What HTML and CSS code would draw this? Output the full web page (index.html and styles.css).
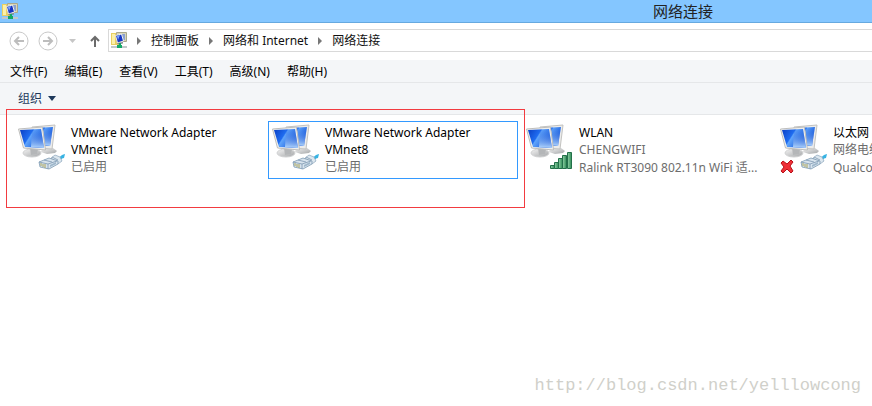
FILE: index.html
```
<!DOCTYPE html>
<html lang="zh-CN">
<head>
<meta charset="utf-8">
<title>网络连接</title>
<link rel="stylesheet" href="styles.css">
</head>
<body>
<svg class="defs" aria-hidden="true">
  <defs>
    <linearGradient id="screen" x1="0" y1="0" x2="1" y2="0.5">
      <stop offset="0" stop-color="#0a3fc4"/>
      <stop offset="0.45" stop-color="#1f6cf0"/>
      <stop offset="0.5" stop-color="#5fa4fb"/>
      <stop offset="1" stop-color="#1456dc"/>
    </linearGradient>
    <linearGradient id="shine" x1="0" y1="0" x2="0" y2="1">
      <stop offset="0" stop-color="#0c48cf" stop-opacity="0"/>
      <stop offset="1" stop-color="#c4e4ff" stop-opacity="0.9"/>
    </linearGradient>
    <linearGradient id="stand" x1="0" y1="0" x2="1" y2="1">
      <stop offset="0" stop-color="#f4f4f4"/>
      <stop offset="1" stop-color="#a3a5a7"/>
    </linearGradient>
    <linearGradient id="bar" x1="0" y1="0" x2="1" y2="0">
      <stop offset="0" stop-color="#93d1a8"/>
      <stop offset="1" stop-color="#2f8c56"/>
    </linearGradient>
    <symbol id="folder-net" viewBox="0 0 16 17">
      <path d="M0 1h5l1 1h3v11H0z" fill="#e8cf62"/>
      <path d="M1 2h3v10H1z" fill="#fbf0a8"/>
      <path d="M5.500 0.500h10v9h-10z" fill="#d9d6b8" stroke="#aaa88c"/>
      <path d="M7 2h7v6H7z" fill="#8ba0d0"/>
      <path d="M4.500 3.500l6-1.500 2 7-6 2z" fill="#1837c6" stroke="#f1f1e8"/>
      <path d="M6 4l3-1-2 5z" fill="#7fa9ff"/>
      <path d="M6 11l6-1v1.500l-5 1z" fill="#86888c"/>
      <path d="M0 14h16v2H0z" fill="#c2c8ca"/>
      <path d="M8 11h2v2h1v3H6v-3h2z" fill="#13a866"/>
    </symbol>
    <symbol id="monitors" viewBox="0 0 48 48">
      <path d="M24 26l11-1 4 3-2 2-8 1-6-2z" fill="url(#stand)"/>
      <path d="M14 4l23-2-3 24-15-1z" fill="#ececeb" stroke="#c2c2c0"/>
      <path d="M16 5l19-1-3 19-14-1z" fill="url(#screen)"/>
      <path d="M26 5l9-1-3 19-6-1z" fill="url(#shine)"/>
      <ellipse cx="14" cy="30" rx="9" ry="4" fill="url(#stand)" stroke="#d0d1d2"/>
      <path d="M12 25l8 1-1 5-6 1z" fill="#b4b6b8"/>
      <path d="M0.500 6l24-2 3 23-22-2z" fill="#f0f0ee" stroke="#bebebc"/>
      <path d="M2 7l21-1 3 19-19-1z" fill="url(#screen)"/>
      <path d="M14 6l9-1 3 20-13-1z" fill="url(#shine)"/>
    </symbol>
    <symbol id="plug" viewBox="0 0 28 18">
      <path d="M19 5c3 0 3-3 8-4l-1 4c-3 0-3 3-6 4z" fill="#38b3e3"/>
      <path d="M13 5l4-3 5 2 2 4-4 3z" fill="#dce7ef" stroke="#8aa4ba" stroke-width="0.700"/>
      <path d="M1 9l10-4 9 3v3l-9 5-9-2z" fill="#d7e3ed" stroke="#7e9ab3" stroke-width="0.800"/>
      <path d="M1 9l9 2 9-3M10 11v5M6 7l8 2M14 4l6 3" fill="none" stroke="#7d98b1" stroke-width="0.800"/>
      <path d="M3 10v3M5 11v3M7 11v4" stroke="#aaa45c"/>
      <path d="M12 12l6-3v2l-6 3z" fill="#9fb7cb"/>
    </symbol>
    <symbol id="signal" viewBox="0 0 22 18">
      <g fill="url(#bar)" stroke="#23704a">
        <path d="M0.500 14.500h4v3h-4z"/>
        <path d="M4.500 11.500h4v6h-4z"/>
        <path d="M8.500 7.500h4v10h-4z"/>
        <path d="M12.500 4.500h4v13h-4z"/>
        <path d="M17.500 1.500h4v16h-4z"/>
      </g>
    </symbol>
    <symbol id="cross" viewBox="0 0 14 14">
      <path d="M1 3l2-2 4 3 4-4 2 2-3 4 3 5-2 2-4-4-4 4-2-2 3-4z" fill="#ef3038" stroke="#b91119"/>
    </symbol>
    <symbol id="back" viewBox="0 0 20 20">
      <circle cx="10" cy="10" r="9" fill="none" stroke="#c9c9c9"/>
      <path d="M15 10H6M10 6l-4 4 4 4" fill="none" stroke="#bdbdbd" stroke-width="2"/>
    </symbol>
  </defs>
</svg>

<header class="titlebar">
  <svg class="small-icon"><use href="#folder-net"/></svg>
  <h1>网络连接</h1>
</header>

<nav class="navbar" aria-label="导航">
  <button class="round" aria-label="后退"><svg><use href="#back"/></svg></button>
  <button class="round forward" aria-label="前进"><svg><use href="#back"/></svg></button>
  <button class="recent" aria-label="最近位置"><svg viewBox="0 0 7 4"><path d="M0 0h7L3.500 4z" fill="#c6c6c6"/></svg></button>
  <button class="up" aria-label="上移"><svg viewBox="0 0 10 12"><path d="M5 12V2M1 6l4-4 4 4" fill="none" stroke="#6b6b6b" stroke-width="2"/></svg></button>
  <div class="address">
    <svg class="small-icon"><use href="#folder-net"/></svg>
    <a href="#">控制面板</a>
    <a href="#">网络和 Internet</a>
    <a href="#">网络连接</a>
  </div>
</nav>

<div class="menubar">
  <button>文件(F)</button>
  <button>编辑(E)</button>
  <button>查看(V)</button>
  <button>工具(T)</button>
  <button>高级(N)</button>
  <button>帮助(H)</button>
</div>

<div class="toolbar">
  <button>组织 <svg viewBox="0 0 8 5"><path d="M0 0h8L4 5z" fill="#1e395b"/></svg></button>
</div>

<main class="content">
  <ul class="connections">
    <li class="connection">
      <span class="icon"><svg class="pc"><use href="#monitors"/></svg><svg class="plug"><use href="#plug"/></svg></span>
      <div class="info"><h2>VMware Network Adapter VMnet1</h2><p>已启用</p></div>
    </li>
    <li class="connection selected">
      <span class="icon"><svg class="pc"><use href="#monitors"/></svg><svg class="plug"><use href="#plug"/></svg></span>
      <div class="info"><h2>VMware Network Adapter VMnet8</h2><p>已启用</p></div>
    </li>
    <li class="connection">
      <span class="icon"><svg class="pc"><use href="#monitors"/></svg><svg class="signal"><use href="#signal"/></svg></span>
      <div class="info"><h2>WLAN</h2><p>CHENGWIFI</p><p>Ralink RT3090 802.11n WiFi 适...</p></div>
    </li>
    <li class="connection">
      <span class="icon"><svg class="pc"><use href="#monitors"/></svg><svg class="plug"><use href="#plug"/></svg><svg class="cross"><use href="#cross"/></svg></span>
      <div class="info"><h2>以太网</h2><p>网络电缆</p><p>Qualcomm</p></div>
    </li>
  </ul>
  <div class="highlight"></div>
  <p class="watermark">http://blog.csdn.net/yelllowcong</p>
</main>
</body>
</html>
```
FILE: styles.css
```
* {
  box-sizing: border-box;
}

body {
  display: flex;
  flex-direction: column;
  min-height: 100vh;
  margin: 0;
  background: #fff;
  color: #000;
  font: 12px/18px "Noto Sans", "Noto Sans CJK SC", sans-serif;
}

h1, h2, p, ul {
  margin: 0;
  padding: 0;
  font-size: inherit;
  font-weight: normal;
}

button {
  padding: 0;
  border: 0;
  background: none;
  color: inherit;
  font: inherit;
}

svg {
  display: block;
}

.defs {
  position: absolute;
  width: 0;
  height: 0;
}

.small-icon {
  width: 16px;
  height: 17px;
}

.titlebar {
  display: flex;
  align-items: center;
  justify-content: space-between;
  height: 23px;
  padding: 0 159px 0 2px;
  border-bottom: 1px solid #66a9df;
  background: #84c6ff;
}

.titlebar h1 {
  color: #222;
  font-size: 15px;
}

.navbar {
  display: flex;
  align-items: center;
  height: 37px;
  padding: 0 0 2px 9px;
}

.round svg {
  width: 20px;
  height: 20px;
}

.forward {
  margin-left: 9px;
  transform: scaleX(-1);
}

.recent {
  margin-left: 11px;
}

.recent svg {
  width: 7px;
  height: 4px;
}

.up {
  margin-left: 14px;
}

.up svg {
  width: 10px;
  height: 12px;
}

.address {
  display: flex;
  flex: 1;
  align-items: center;
  height: 23px;
  margin-left: 8px;
  padding-left: 2px;
  border: 1px solid #d9d9d9;
  border-right: 0;
}

.address a {
  display: flex;
  align-items: center;
  color: #111;
  text-decoration: none;
}

.address a::before {
  margin: 0 10px;
  border: solid transparent;
  border-width: 4px 0 4px 4px;
  border-left-color: #777;
  content: "";
}

.menubar {
  display: flex;
  gap: 17px;
  height: 23px;
  padding: 2px 10px 0;
  border-bottom: 1px solid #e5e7e9;
  background: #f4f6f8;
}

.toolbar {
  display: flex;
  height: 32px;
  padding: 0 18px;
  border-bottom: 1px solid #e5e7e9;
  background: #f4f6f8;
  color: #1e395b;
}

.toolbar button {
  display: flex;
  align-items: center;
  gap: 6px;
}

.toolbar svg {
  width: 8px;
  height: 5px;
}

.content {
  position: relative;
  flex: 1;
  overflow: hidden;
}

.connections {
  display: grid;
  grid-template-columns: repeat(4, 250px);
  gap: 4px;
  padding: 6px 14px;
  list-style: none;
}

.connection {
  display: flex;
  gap: 4px;
  min-height: 58px;
  padding: 1px 3px;
  border: 1px solid transparent;
}

.selected {
  border-color: #3399ff;
}

.icon {
  position: relative;
  flex: none;
  width: 49px;
  height: 48px;
}

.pc {
  width: 48px;
  height: 48px;
}

.plug {
  position: absolute;
  right: 1px;
  bottom: 0;
  width: 28px;
  height: 18px;
}

.signal {
  position: absolute;
  right: 3px;
  bottom: 2px;
  width: 22px;
  height: 18px;
}

.cross {
  position: absolute;
  bottom: -3px;
  left: 0;
  width: 14px;
  height: 14px;
}

.info {
  min-width: 0;
  padding-top: 1px;
  white-space: nowrap;
}

.info h2 {
  max-width: 170px;
  line-height: 17px;
  white-space: normal;
}

.info p {
  color: #6d6d6d;
}

.highlight {
  position: absolute;
  top: -6px;
  left: 6px;
  width: 519px;
  height: 99px;
  border: 1px solid #f23b40;
}

.content {
  overflow: visible;
}

.connections {
  overflow: hidden;
}

.watermark {
  position: absolute;
  right: 11px;
  bottom: 10px;
  color: #d0d0ca;
  font: 17px/20px "Liberation Mono", monospace;
}
```
